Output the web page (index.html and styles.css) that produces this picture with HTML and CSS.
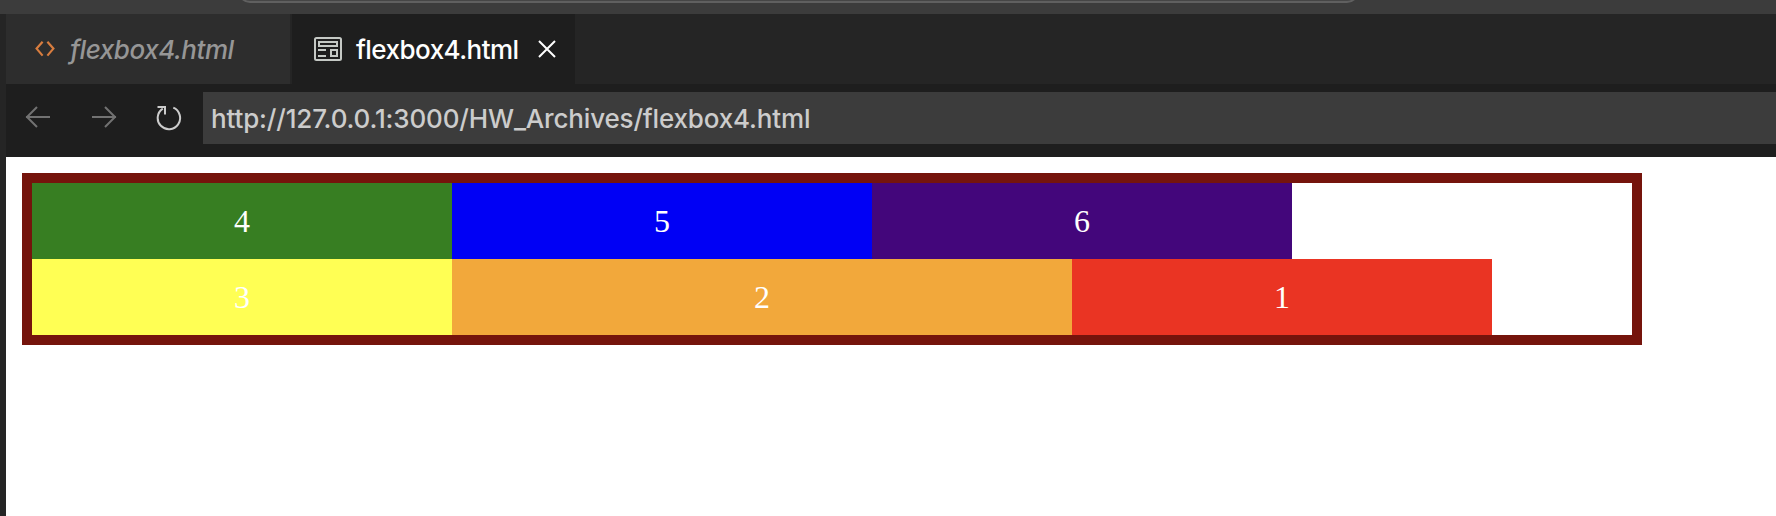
FILE: index.html
```html
<!DOCTYPE html>
<html lang="en">
<head>
<meta charset="utf-8">
<title>flexbox4.html</title>
<link rel="stylesheet" href="styles.css">
</head>
<body>
<header class="titlebar"><div class="command-center"></div></header>
<main class="editor">
  <nav class="tabs">
    <div class="tab tab-preview">
      <svg class="code-icon" width="20" height="16" viewBox="0 0 20 16"><path d="M7.6 .8 1.6 7.6l6 7M12.4.8l6 6.8-6 7"/></svg>
      <span class="tab-label">flexbox4.html</span>
    </div>
    <div class="tab tab-active">
      <svg class="page-icon" width="28" height="24" viewBox="0 0 28 24"><rect x="1" y="1" width="26" height="22" rx="1.5"/><path d="M5 5h18v4H5zM17 13h6v6h-6zM4 13h8M4 19h8"/></svg>
      <span class="tab-label">flexbox4.html</span>
      <svg class="close-icon" width="18" height="18" viewBox="0 0 18 18"><path d="m1 1 16 16M17 1 1 17"/></svg>
    </div>
  </nav>
  <div class="toolbar">
    <svg class="nav-icon back" width="26" height="22" viewBox="0 0 26 22"><path d="M12 1 2 11l10 10M1 11h24"/></svg>
    <svg class="nav-icon forward" width="26" height="22" viewBox="0 0 26 22"><path d="m14 1 10 10-10 10M1 11h24"/></svg>
    <svg class="nav-icon reload" width="26" height="26" viewBox="0 0 26 26"><path d="M1.5 2H9v7.500M6.800 3.600A11.200 11.200 0 1 0 17.300 2.700"/></svg>
    <div class="address"><span class="url">http://127.0.0.1:3000/HW_Archives/flexbox4.html</span></div>
  </div>
  <section class="page">
    <div class="container">
      <div class="item green">4</div>
      <div class="item blue">5</div>
      <div class="item indigo">6</div>
      <div class="item yellow">3</div>
      <div class="item orange">2</div>
      <div class="item red">1</div>
    </div>
  </section>
</main>
</body>
</html>
```
FILE: styles.css
```css
* { box-sizing: border-box; }
body {
  margin: 0;
  height: 516px;
  display: flex;
  flex-direction: column;
  overflow: hidden;
  background: #252525;
  font-family: Inter, sans-serif;
  font-size: 26px;
  font-weight: 500;
}
svg { display: block; flex: none; fill: none; stroke: currentColor; }
.titlebar { height: 14px; background: #3c3c3c; padding-left: 238px; overflow: hidden; }
.command-center {
  width: 1121px;
  height: 24px;
  margin-top: -21px;
  border: 2px solid #606060;
  border-radius: 12px;
  background: #464646;
}
.editor { flex: 1; margin-left: 6px; display: flex; flex-direction: column; }
.tabs { height: 70px; display: flex; background: #252525; }
.tab { display: flex; align-items: center; white-space: nowrap; }
.tab-preview {
  width: 286px;
  padding-left: 29px;
  gap: 15px;
  background: #2d2d2d;
  border-right: 2px solid #252525;
  color: #969696;
  font-style: italic;
}
.tab-active { width: 283px; padding-left: 22px; gap: 14px; background: #1e1e1e; color: #fff; }
.tab-label { width: 165px; letter-spacing: -0.53px; }
.tab-preview .tab-label { letter-spacing: -0.45px; }
.code-icon { color: #d87d3f; stroke-width: 2.2; }
.page-icon { color: #c5c9c5; stroke-width: 2; }
.close-icon { margin-left: 3px; stroke-width: 2; }
.toolbar { height: 73px; padding: 8px 0 13px 19px; display: flex; align-items: center; background: #1e1e1e; }
.nav-icon { stroke-width: 2; }
.back { margin-bottom: 2px; color: #727272; }
.forward { margin-left: 40px; margin-bottom: 2px; color: #727272; }
.reload { margin-left: 39px; color: #ccc; }
.address {
  flex: 1;
  height: 52px;
  margin-left: 21px;
  padding-left: 8px;
  display: flex;
  align-items: center;
  background: #3c3c3c;
  color: #ccc;
}
.url { white-space: nowrap; letter-spacing: -0.16px; }
.page { flex: 1; padding: 16px; background: #fff; }
.container {
  width: 1620px;
  height: 172px;
  border: 10px solid #75140c;
  display: flex;
  flex-wrap: wrap;
  align-content: flex-start;
  font-family: "Liberation Serif", serif;
  font-size: 32px;
  font-weight: 400;
  color: #fff;
}
.item { width: 420px; height: 76px; line-height: 76px; text-align: center; }
.green { background: #377e22; }
.blue { background: #0000f5; }
.indigo { background: #43067b; }
.yellow { background: #ffff54; }
.orange { width: 620px; background: #f2a83b; }
.red { background: #ea3423; }
```
